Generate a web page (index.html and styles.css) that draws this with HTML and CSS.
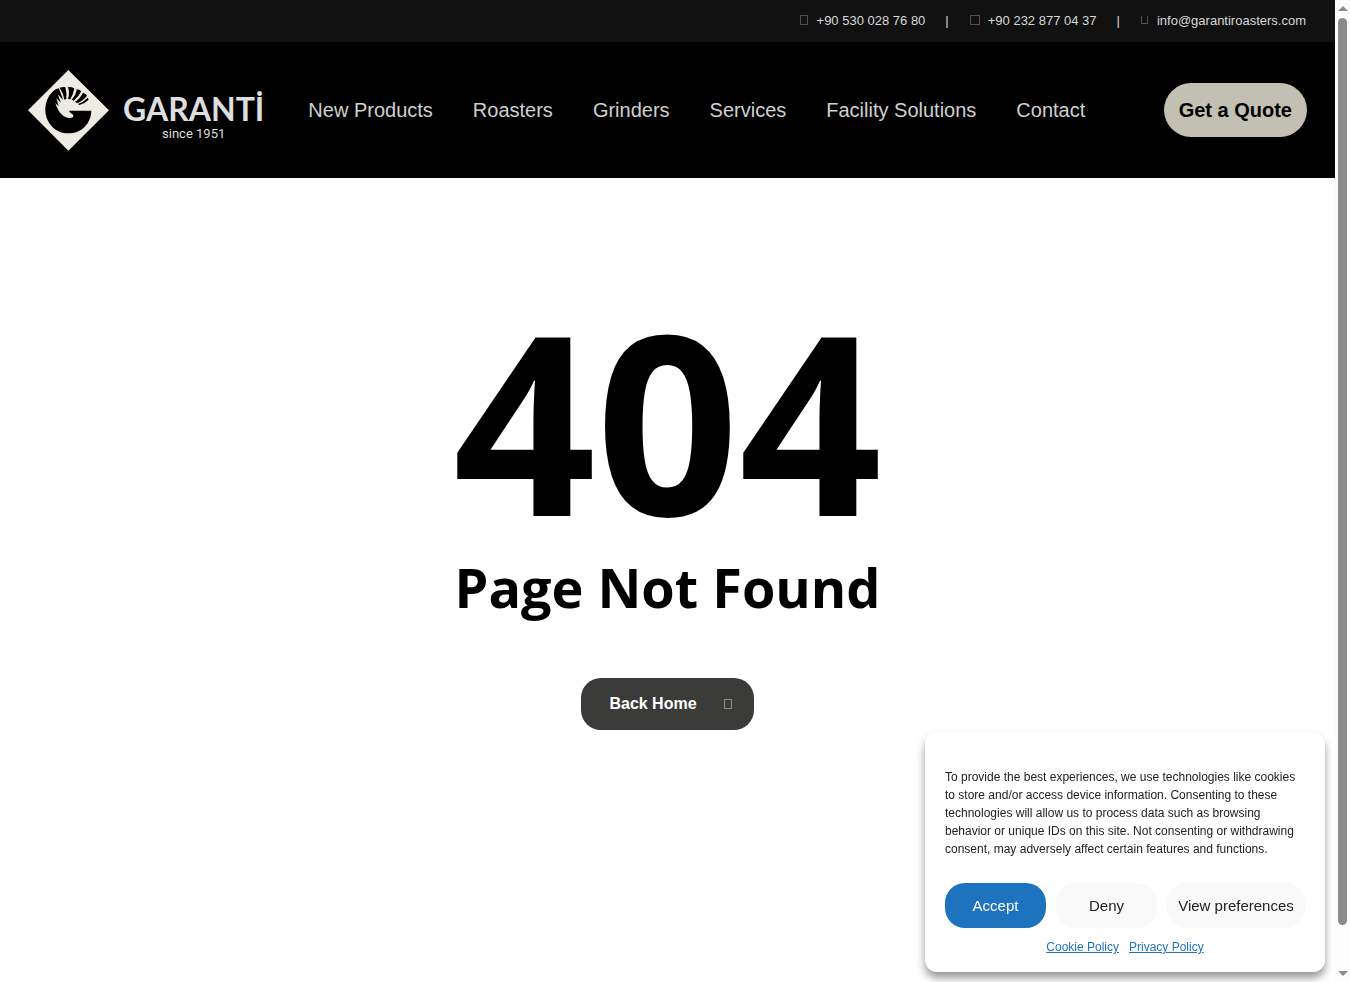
FILE: index.html
```
<!DOCTYPE html>
<html lang="en">

<head>
    <meta charset="UTF-8">
    <meta name="viewport" content="width=device-width, initial-scale=1">
    <title>Page Not Found - Garanti</title>
    <link rel="stylesheet" href="styles.css">
</head>

<body>
    <div class="page">
        <header>
            <div class="topbar">
                <a href="#"><i class="glyph"></i>+90 530 028 76 80</a>
                <span class="sep">|</span>
                <a href="#"><i class="glyph wide"></i>+90 232 877 04 37</a>
                <span class="sep">|</span>
                <a href="#"><i class="glyph short"></i>info@garantiroasters.com</a>
            </div>
            <div class="navbar">
                <a class="logo" href="#">
                    <svg class="mark" viewBox="24 29 243 243" aria-hidden="true">
                        <path class="light" d="M145 29 267 150 145 271 24 150Z" />
                        <path d="M107 87C86 101 75 126 76 151C78 190 108 219 145 219C184 219 213 190 214 151H148V154L160 164L159 171C146 176 132 170 123 160C114 150 110 140 106 128L116 138L109 113L123 128L113 101L129 119C126 106 120 96 117 84Z" />
                        <path d="M119 82Q128 79 136 80Q141 98 139 116L133 118Q131 100 119 82Z" />
                        <path d="M144 80Q154 79 163 84Q160 102 151 117L144 116Q150 99 144 80Z" />
                        <path d="M170 87Q178 87 184 93Q176 110 161 121L155 118Q168 104 170 87Z" />
                        <path d="M189 97Q198 100 201 106Q189 122 171 129L165 124Q181 114 189 97Z" />
                        <path d="M203 112L206 118Q194 130 178 134L174 131Q191 125 203 112Z" />
                    </svg>
                    <span class="brand">
                        <span class="name">GARANTİ</span>
                        <span class="since">since 1951</span>
                    </span>
                </a>
                <nav>
                    <a href="#">New Products</a>
                    <a href="#">Roasters</a>
                    <a href="#">Grinders</a>
                    <a href="#">Services</a>
                    <a href="#">Facility Solutions</a>
                    <a href="#">Contact</a>
                </nav>
                <a class="quote" href="#">Get a Quote</a>
            </div>
        </header>

        <main>
            <h1>404</h1>
            <h2>Page Not Found</h2>
            <a class="home" href="#">Back Home<i class="glyph"></i></a>
        </main>
    </div>

    <div class="cookies" role="dialog" aria-label="Cookie consent">
        <p>To provide the best experiences, we use technologies like cookies to store and/or access device information. Consenting to these technologies will allow us to process data such as browsing behavior or unique IDs on this site. Not consenting or withdrawing consent, may adversely affect certain features and functions.</p>
        <div class="buttons">
            <button class="accept" type="button">Accept</button>
            <button type="button">Deny</button>
            <button type="button">View preferences</button>
        </div>
        <div class="policies">
            <a href="#">Cookie Policy</a>
            <a href="#">Privacy Policy</a>
        </div>
    </div>

    <div class="scrollbar" aria-hidden="true">
        <span class="up"></span>
        <span class="thumb"></span>
        <span class="down"></span>
    </div>
</body>

</html>
```
FILE: styles.css
```
* {
    box-sizing: border-box;
}

body {
    margin: 0;
    background: #fff;
    font-family: "Liberation Sans", Arial, sans-serif;
}

a {
    color: inherit;
    text-decoration: none;
}

.page {
    margin-right: 15px;
}

/* header */
.topbar {
    display: flex;
    justify-content: flex-end;
    align-items: center;
    height: 42px;
    padding: 0 29px 2px;
    background: #111;
    color: #d8d8d8;
    font-size: 13px;
}

.topbar a {
    display: flex;
    align-items: center;
}

.sep {
    margin: 0 21px 0 20px;
}

/* empty box of a missing icon glyph */
.glyph {
    width: 8px;
    height: 10px;
    margin-right: 9px;
    border: 1px solid #505050;
}

.wide {
    width: 10px;
    margin-right: 8px;
}

.short {
    width: 7px;
    height: 8px;
    border-top: 0;
}

.navbar {
    display: flex;
    align-items: center;
    height: 136px;
    padding: 0 28px;
    background: #000;
}

.logo {
    display: flex;
    align-items: center;
    gap: 14px;
    margin-right: 44px;
}

.mark {
    width: 81px;
    height: 81px;
}

.light {
    fill: #eeebe2;
}

.brand {
    display: flex;
    flex-direction: column;
    align-items: center;
    padding-top: 12px;
    color: #dedede;
}

.name {
    font: bold 32px/36px Lato, sans-serif;
}

.since {
    font: 13px/14px Roboto, sans-serif;
}

nav {
    display: flex;
    gap: 40px;
    color: #d0d0d0;
    font-size: 20px;
}

.quote {
    margin-left: auto;
    padding: 0 15px;
    border-radius: 27px;
    background: #c1c0b2;
    color: #000;
    font-size: 20px;
    font-weight: bold;
    line-height: 54px;
}

/* 404 */
main {
    display: flex;
    flex-direction: column;
    align-items: center;
    padding-top: 116px;
}

h1,
h2 {
    margin: 0;
    font-family: "Open Sans", sans-serif;
    font-weight: bold;
}

h1 {
    font-size: 250px;
    line-height: 250px;
}

h2 {
    margin: 8px 0 56px;
    font-size: 54px;
    line-height: 70px;
}

.home {
    display: flex;
    align-items: center;
    height: 52px;
    padding: 0 22px 0 28px;
    border-radius: 20px;
    background: #3b3b39;
    color: #fff;
    font-size: 16px;
    font-weight: bold;
}

.home .glyph {
    margin: 0 0 0 27px;
    border-color: #8a8a8a;
}

/* cookie banner */
.cookies {
    position: fixed;
    right: 25px;
    bottom: 10px;
    width: 400px;
    padding: 36px 20px 16px;
    border-radius: 12px;
    background: #fff;
    box-shadow: 0 6px 8px rgba(0, 0, 0, 0.4);
    color: #222;
    font-size: 12px;
    line-height: 18px;
}

.cookies p {
    margin: 0 0 25px;
}

.buttons {
    display: flex;
    gap: 10px;
}

.buttons button {
    flex: 1 0 auto;
    min-width: 101px;
    height: 45px;
    padding: 0 10px;
    border: 0;
    border-radius: 20px;
    background: #f9f9f9;
    color: #222;
    font: 15px "Liberation Sans", Arial, sans-serif;
}

.buttons .accept {
    background: #1e73be;
    color: #fff;
}

.policies {
    display: flex;
    justify-content: center;
    gap: 10px;
    margin-top: 10px;
    color: #1e73be;
}

.policies a {
    text-decoration: underline;
}

/* scrollbar */
.scrollbar {
    position: fixed;
    top: 0;
    right: 0;
    bottom: 0;
    display: flex;
    flex-direction: column;
    align-items: center;
    width: 15px;
    padding: 6px 0;
    background: #fcfcfc;
}

.up,
.down {
    border: 5px solid transparent;
}

.up {
    border-top: 0;
    border-bottom-color: #8b8b8b;
}

.down {
    margin-top: auto;
    border-bottom: 0;
    border-top-color: #8b8b8b;
}

.thumb {
    width: 9px;
    height: calc(94% - 5px);
    margin-top: 7px;
    border-radius: 5px;
    background: #8b8b8b;
}
```
